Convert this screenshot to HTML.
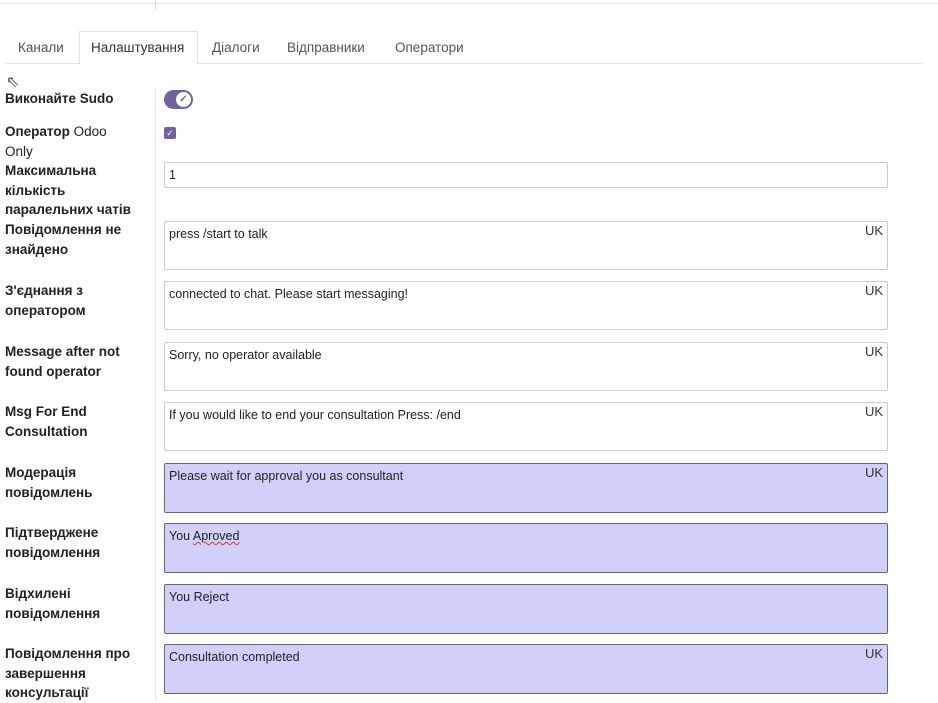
<!DOCTYPE html>
<html><head><meta charset="utf-8"><style>
body{margin:0;width:938px;height:701px;background:#fff;position:relative;overflow:hidden;font-family:"Liberation Sans",sans-serif;color:#222}
.a{position:absolute}
.tab{position:absolute;top:40px;font-size:13.5px;color:#555}
.lbl{position:absolute;left:5px;font-weight:bold;font-size:13.5px;line-height:19.5px;color:#222;width:136px}
.ta{position:absolute;left:164px;width:724px;height:49px;border:1px solid #ccc;border-radius:2px;background:#fff;font-size:12.5px;color:#222;box-sizing:border-box;padding:5px 4px}
.ta.p{background:#d0d0fb;border-color:#666}
.uk{position:absolute;left:865px;font-size:13px;color:#333}
</style></head><body>
<div class="a" style="left:0;top:3px;width:938px;height:1px;background:#e6e6e6"></div>
<div class="a" style="left:155px;top:0;width:1px;height:10px;background:#ddd"></div>
<div class="a" style="left:5px;top:63px;width:918px;height:1px;background:#dee2e6"></div>
<div class="a" style="left:79px;top:31px;width:119px;height:33px;border:1px solid #dee2e6;border-bottom:none;background:#fff;box-sizing:border-box"></div>
<div class="tab" style="left:18px">Канали</div>
<div class="tab" style="left:91px;color:#333">Налаштування</div>
<div class="tab" style="left:212px">Діалоги</div>
<div class="tab" style="left:287px">Відправники</div>
<div class="tab" style="left:395px">Оператори</div>
<div class="a" style="left:155px;top:88px;width:1px;height:613px;background:#e6e6e6"></div>
<div class="a" style="left:6px;top:72px;font-size:16px;color:#555">⇖</div>

<div class="lbl" style="top:89px">Виконайте Sudo</div>
<div class="a" style="left:164px;top:90px;width:29px;height:19px;border-radius:10px;background:#71639e"></div>
<div class="a" style="left:176px;top:92px;width:15px;height:15px;border-radius:50%;background:#fff;font-size:10px;line-height:15px;text-align:center;color:#71639e;font-weight:bold">✓</div>

<div class="lbl" style="top:122px">Оператор <span style="font-weight:normal">Odoo<br>Only</span></div>
<div class="a" style="left:164px;top:127px;width:12px;height:12px;border-radius:2px;background:#71639e;color:#fff;font-size:9px;line-height:12px;text-align:center">✓</div>

<div class="lbl" style="top:161px">Максимальна кількість паралельних чатів</div>
<div class="a" style="left:164px;top:162px;width:724px;height:26px;border:1px solid #ccc;border-radius:2px;box-sizing:border-box;font-size:12.5px;padding:5px 4px">1</div>

<div class="lbl" style="top:220px">Повідомлення не знайдено</div>
<div class="ta" style="top:221px">press /start to talk</div><div class="uk" style="top:223px">UK</div>

<div class="lbl" style="top:281px">З'єднання з оператором</div>
<div class="ta" style="top:281px">connected to chat. Please start messaging!</div><div class="uk" style="top:283px">UK</div>

<div class="lbl" style="top:342px">Message after not found operator</div>
<div class="ta" style="top:342px">Sorry, no operator available</div><div class="uk" style="top:344px">UK</div>

<div class="lbl" style="top:402px">Msg For End Consultation</div>
<div class="ta" style="top:402px">If you would like to end your consultation Press: /end</div><div class="uk" style="top:404px">UK</div>

<div class="lbl" style="top:463px">Модерація повідомлень</div>
<div class="ta p" style="top:463px;height:50px">Please wait for approval you as consultant</div><div class="uk" style="top:465px">UK</div>

<div class="lbl" style="top:523px">Підтверджене повідомлення</div>
<div class="ta p" style="top:523px;height:50px">You <span style="text-decoration:underline wavy #d33;text-decoration-thickness:1px">Aproved</span></div>

<div class="lbl" style="top:584px">Відхилені повідомлення</div>
<div class="ta p" style="top:584px;height:50px">You Reject</div>

<div class="lbl" style="top:644px">Повідомлення про завершення консультації</div>
<div class="ta p" style="top:644px;height:50px">Consultation completed</div><div class="uk" style="top:646px">UK</div>
</body></html>
